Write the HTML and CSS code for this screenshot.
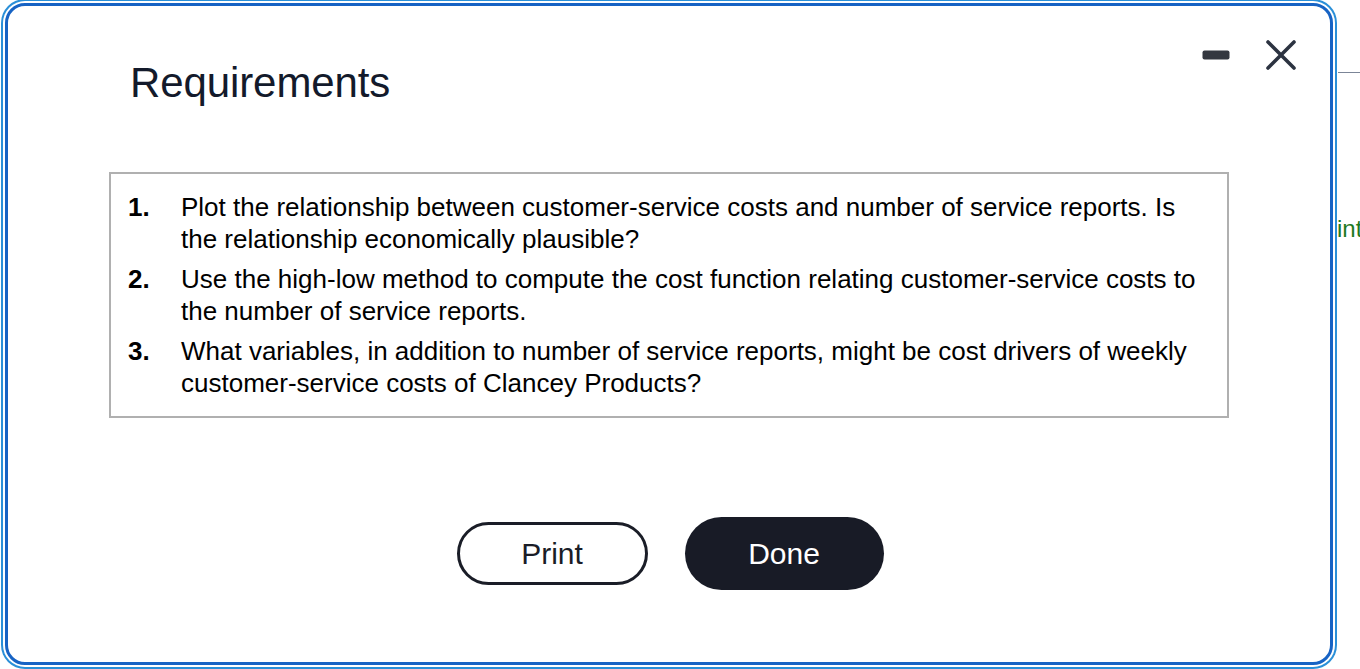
FILE: index.html
```html
<!DOCTYPE html>
<html lang="en">
<head>
<meta charset="utf-8">
<title>Requirements</title>
<link rel="stylesheet" href="styles.css">
</head>
<body>
<div class="page-bg">
  <div class="bg-rule"></div>
  <p class="bg-text">int</p>
</div>

<div class="dialog" role="dialog" aria-labelledby="dlg-title">
  <div class="window-controls">
    <button class="icon-btn minimize" aria-label="Minimize">
      <svg width="28" height="10" viewBox="0 0 28 10"><rect x="0.5" y="0.5" width="27" height="9" rx="2" fill="#343840"/></svg>
    </button>
    <button class="icon-btn close" aria-label="Close">
      <svg width="30" height="30" viewBox="0 0 30 30"><path d="M2 2 L28 28 M28 2 L2 28" stroke="#2c3341" stroke-width="3.6" stroke-linecap="round" fill="none"/></svg>
    </button>
  </div>

  <h1 class="title" id="dlg-title">Requirements</h1>

  <ol class="req-list">
    <li class="req-item"><span class="req-num">1.</span><span class="req-text">Plot the relationship between customer-service costs and number of service reports. Is the relationship economically plausible?</span></li>
    <li class="req-item"><span class="req-num">2.</span><span class="req-text">Use the high-low method to compute the cost function relating customer-service costs to the number of service reports.</span></li>
    <li class="req-item"><span class="req-num">3.</span><span class="req-text">What variables, in addition to number of service reports, might be cost drivers of weekly customer-service costs of Clancey Products?</span></li>
  </ol>

  <div class="actions">
    <button class="btn btn-outline">Print</button>
    <button class="btn btn-solid">Done</button>
  </div>
</div>
</body>
</html>
```

FILE: styles.css
```css
* { box-sizing: border-box; }

html, body {
  margin: 0;
  padding: 0;
  background: #ffffff;
  width: 1360px;
  height: 669px;
  overflow: hidden;
  font-family: "Liberation Sans", Arial, sans-serif;
}

.page-bg {
  padding-top: 72px;
}

.bg-rule {
  height: 1px;
  margin-left: 1338px;
  background: #7b8597;
}

.bg-text {
  margin: 141px 0 0 1337px;
  color: #1f7a1f;
  font-size: 24px;
  line-height: 30px;
}

.dialog {
  position: absolute;
  top: 3px;
  left: 5px;
  width: 1328px;
  height: 662px;
  background: #ffffff;
  border: 3px solid #1763c4;
  border-radius: 20px;
  box-shadow: 0 0 0 2px #ffffff, 0 0 0 4px #2a8fd8;
  display: flex;
  flex-direction: column;
}

.window-controls {
  position: absolute;
  top: 34px;
  right: 34px;
  display: flex;
  align-items: center;
  gap: 36px;
}

.icon-btn {
  border: 0;
  background: none;
  padding: 0;
  margin: 0;
  display: block;
  line-height: 0;
}

.title {
  margin: 53px 0 0 122px;
  font-size: 42px;
  line-height: 48px;
  font-weight: 400;
  color: #131a2b;
  letter-spacing: -0.1px;
}

.req-list {
  list-style: none;
  margin: 65px 0 0 101px;
  width: 1120px;
  padding: 17px 20px 17px 17px;
  border: 2px solid #b0b0b0;
  display: flex;
  flex-direction: column;
  gap: 8px;
}

.req-item {
  display: flex;
  font-size: 26px;
  line-height: 32px;
  color: #000000;
}

.req-num {
  flex: 0 0 53px;
  font-weight: 700;
}

.req-text {
  flex: 1;
}

.actions {
  margin-top: 99px;
  display: flex;
  justify-content: center;
  align-items: center;
  gap: 37px;
  padding-left: 2px;
}

.btn {
  font-family: "Liberation Sans", Arial, sans-serif;
  font-size: 30px;
  padding: 0;
  cursor: pointer;
}

.btn-outline {
  width: 191px;
  height: 63px;
  border: 3px solid #1a1d27;
  border-radius: 32px;
  background: #ffffff;
  color: #1a1d27;
}

.btn-solid {
  width: 199px;
  height: 73px;
  border: 0;
  border-radius: 37px;
  background: #181b26;
  color: #ffffff;
}
```
